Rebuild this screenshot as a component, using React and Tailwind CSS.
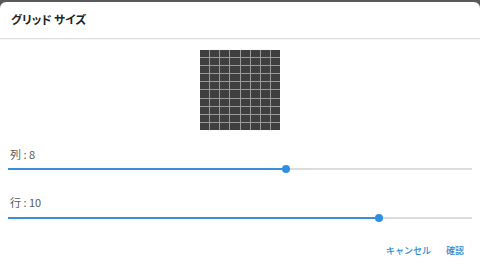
import React, { useState } from 'react';

const FONT = { fontFamily: '"Noto Sans CJK JP", "Noto Sans", sans-serif' };
const MIN = 2;
const MAX = 12;

function GridPreview({ cols, rows }) {
  const cells = Array.from({ length: cols * rows });
  return (
    <div
      className="grid gap-px bg-[#9a9a9a] w-[80px] h-[80px]"
      style={{
        gridTemplateColumns: `repeat(${cols}, 1fr)`,
        gridTemplateRows: `repeat(${rows}, 1fr)`,
      }}
    >
      {cells.map((_, i) => (
        <div key={i} className="bg-[#3f3f3f]" />
      ))}
    </div>
  );
}

function Slider({ value }) {
  const pct = ((value - MIN) / (MAX - MIN)) * 100;
  return (
    <div className="relative h-[10px] flex items-center">
      <div className="w-full h-[2px] bg-[#dcdcdc]" />
      <div className="absolute left-0 h-[2px] bg-[#3a8fd6]" style={{ width: `${pct}%` }} />
      <div
        className="absolute w-[8px] h-[8px] -ml-[4px] rounded-full bg-[#2f8ee0]"
        style={{ left: `${pct}%` }}
      />
    </div>
  );
}

export default function App() {
  const [cols] = useState(8);
  const [rows] = useState(10);

  return (
    <div className="w-[480px] h-[278px] bg-[#5a5a5a] pt-[2px] overflow-hidden" style={FONT}>
      <div className="bg-white rounded-t-[6px] h-[276px] flex flex-col">
        <div className="h-[37px] flex items-center px-[11px] border-b border-[#e2e2e2] shadow-[0_1px_1px_rgba(0,0,0,0.04)]">
          <span className="text-[11.5px] font-bold text-[#222] [font-feature-settings:'palt']">グリッド サイズ</span>
        </div>

        <div className="flex justify-center pt-[11px]">
          <GridPreview cols={cols} rows={rows} />
        </div>

        <div className="px-[8px] pt-[17px]">
          <div className="text-[11px] leading-[14px] text-[#5a5a5a] pl-[2px]">列 : {cols}</div>
          <div className="mt-[3px]">
            <Slider value={cols} />
          </div>

          <div className="text-[11px] leading-[14px] text-[#5a5a5a] pl-[2px] mt-[21px]">行 : {rows}</div>
          <div className="mt-[4px]">
            <Slider value={rows} />
          </div>
        </div>

        <div className="flex justify-end gap-[15px] pr-[16px] pt-[22px]">
          <button className="text-[9px] leading-[12px] text-[#2c8bd3] font-medium">キャンセル</button>
          <button className="text-[9px] leading-[12px] text-[#2c8bd3] font-medium">確認</button>
        </div>
      </div>
    </div>
  );
}
